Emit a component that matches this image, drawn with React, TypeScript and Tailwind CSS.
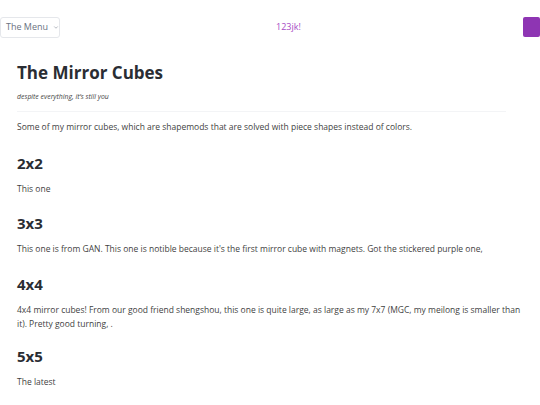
import { ChevronDown } from 'lucide-react'

const sections = [
  { title: '2x2', body: 'This one', gap: 'mt-[18px]' },
  { title: '3x3', body: "This one is from GAN. This one is notible because it's the first mirror cube with magnets. Got the stickered purple one,", gap: 'mt-[16px]' },
  { title: '4x4', body: '4x4 mirror cubes! From our good friend shengshou, this one is quite large, as large as my 7x7 (MGC, my meilong is smaller than it). Pretty good turning, .', gap: 'mt-[17px]' },
  { title: '5x5', body: 'The latest', gap: 'mt-[14px]' },
]

export default function App() {
  return (
    <div className="min-h-[405px] bg-white text-[#3f3f3f]" style={{ fontFamily: '"Open Sans", "Noto Sans", sans-serif' }}>
      {/* top bar */}
      <div className="flex items-center justify-between h-[54px]">
        <button className="flex items-center gap-[5px] h-[21px] w-[60px] pl-[5px] whitespace-nowrap border border-gray-200 rounded-[3px] text-[9px] text-gray-500 bg-white">
          The Menu
          <ChevronDown className="w-[7px] h-[7px]" strokeWidth={2} />
        </button>
        <span className="text-[9px] text-[#a84cc4] -ml-[6px]">123jk!</span>
        <div className="w-[17px] h-[20px] bg-[#8e35b3] rounded-[2px]" />
      </div>

      <div className="px-[17px]">
        <h1 className="text-[17px] font-bold text-[#2a2d33] leading-[24px] mt-[7px]">The Mirror Cubes</h1>
        <p className="text-[6.9px] italic text-[#444] mt-[7px] leading-[10px]">despite everything, it’s still you</p>
        <div className="h-px bg-gray-100 mt-[9px] mr-[17px]" />
        <p className="text-[8.5px] mt-[8px] leading-[14px]">Some of my mirror cubes, which are shapemods that are solved with piece shapes instead of colors.</p>

        {sections.map(s => (
          <div key={s.title} className={s.gap}>
            <h2 className="text-[15px] font-bold text-[#2a2d33] leading-[22px]">{s.title}</h2>
            <p className="text-[8.5px] mt-[8px] leading-[14px]">{s.body}</p>
          </div>
        ))}
      </div>
    </div>
  )
}
